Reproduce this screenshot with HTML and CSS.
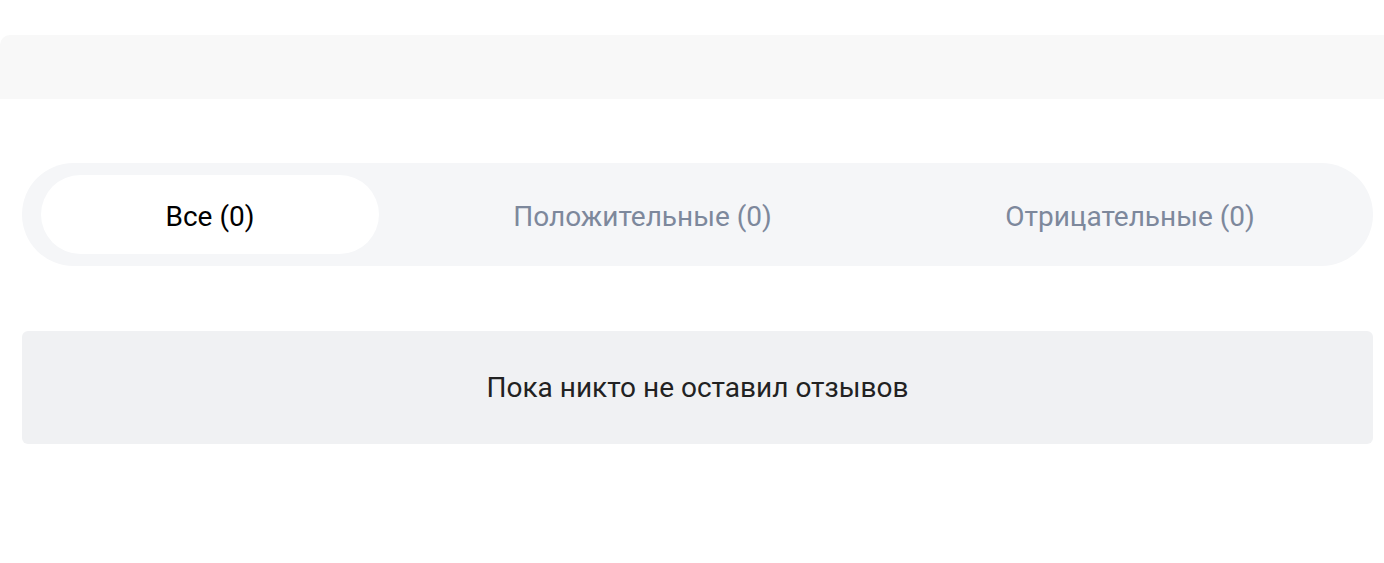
FILE: index.html
```html
<!DOCTYPE html>
<html lang="ru">
<head>
<meta charset="utf-8">
<title>Отзывы</title>
<link rel="stylesheet" href="styles.css">
</head>
<body>
<div class="top"></div>
<div class="strip"></div>
<main class="content">
  <div class="tabs">
    <button class="tab active">Все (0)</button>
    <button class="tab">Положительные (0)</button>
    <button class="tab">Отрицательные (0)</button>
  </div>
  <div class="empty">Пока никто не оставил отзывов</div>
</main>
</body>
</html>
```

FILE: styles.css
```css
html, body {
  margin: 0;
  padding: 0;
  background: #ffffff;
  font-family: Roboto, "Noto Sans", Arial, sans-serif;
}
.top {
  height: 35px;
  background: #ffffff;
}
.strip {
  height: 64px;
  background: #f8f8f8;
  border-top-left-radius: 10px;
}
.content {
  background: #ffffff;
  padding: 64px 11px 0 22px;
  min-height: 400px;
  border-top-left-radius: 6px;
}
.tabs {
  display: grid;
  grid-template-columns: 338px 527px 1fr;
  background: #f5f6f8;
  border-radius: 52px;
  padding: 12px 19px;
}
.tab {
  height: 79px;
  border: 0;
  border-radius: 40px;
  background: transparent;
  font-family: inherit;
  font-size: 28px;
  color: #7d889c;
  padding: 4px 0 0;
  cursor: pointer;
}
.tab.active {
  background: #ffffff;
  color: #000000;
}
.empty {
  margin-top: 65px;
  height: 113px;
  background: #f0f1f3;
  border-radius: 6px;
  display: flex;
  align-items: center;
  justify-content: center;
  font-size: 28px;
  color: #222222;
}
```
